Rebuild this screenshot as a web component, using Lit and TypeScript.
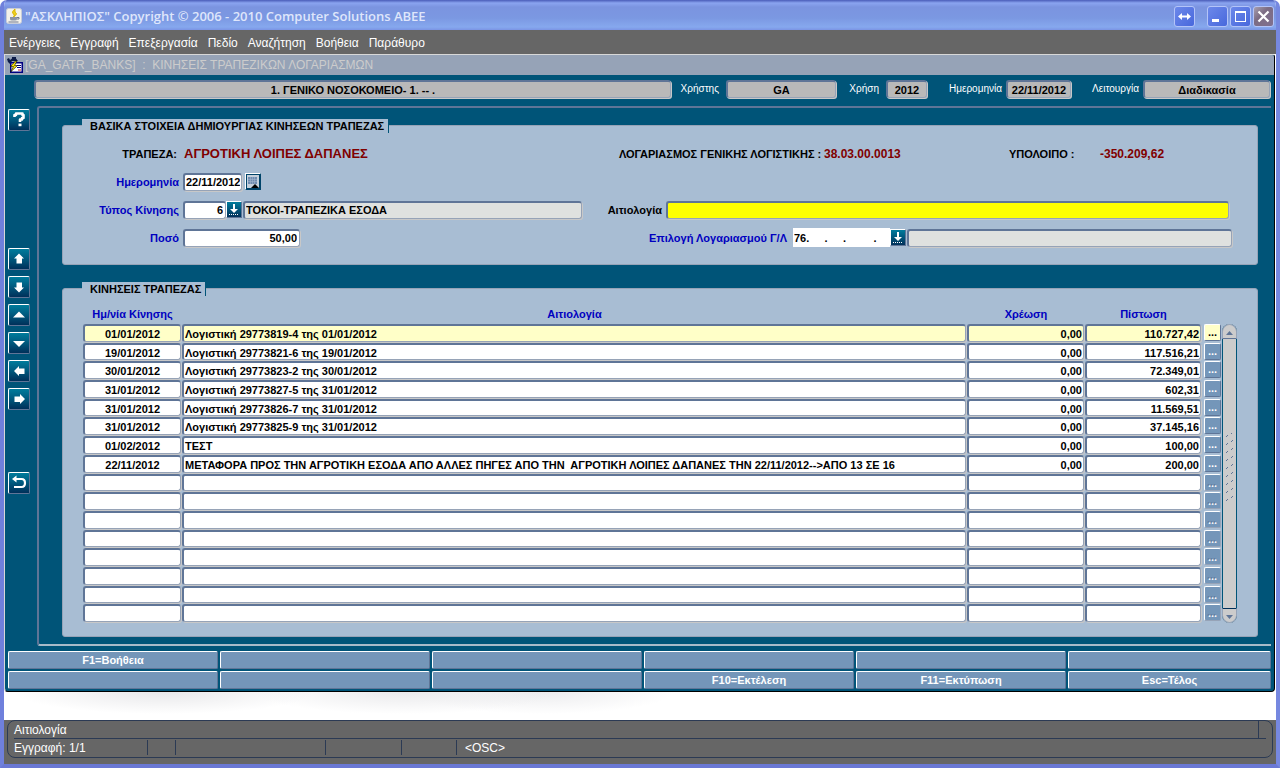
import { LitElement, html, svg, css } from "lit";
import { customElement, property } from "lit/decorators.js";
import { classMap } from "lit/directives/class-map.js";

interface Movement {
  date: string;
  reason: string;
  debit: string;
  credit: string;
}

const MENU = ["Ενέργειες", "Εγγραφή", "Επεξεργασία", "Πεδίο", "Αναζήτηση", "Βοήθεια", "Παράθυρο"];

const MOVEMENTS: Movement[] = [
  { date: "01/01/2012", reason: "Λογιστική 29773819-4 της 01/01/2012", debit: "0,00", credit: "110.727,42" },
  { date: "19/01/2012", reason: "Λογιστική 29773821-6 της 19/01/2012", debit: "0,00", credit: "117.516,21" },
  { date: "30/01/2012", reason: "Λογιστική 29773823-2 της 30/01/2012", debit: "0,00", credit: "72.349,01" },
  { date: "31/01/2012", reason: "Λογιστική 29773827-5 της 31/01/2012", debit: "0,00", credit: "602,31" },
  { date: "31/01/2012", reason: "Λογιστική 29773826-7 της 31/01/2012", debit: "0,00", credit: "11.569,51" },
  { date: "31/01/2012", reason: "Λογιστική 29773825-9 της 31/01/2012", debit: "0,00", credit: "37.145,16" },
  { date: "01/02/2012", reason: "ΤΕΣΤ", debit: "0,00", credit: "100,00" },
  {
    date: "22/11/2012",
    reason: "ΜΕΤΑΦΟΡΑ ΠΡΟΣ ΤΗΝ ΑΓΡΟΤΙΚΗ ΕΣΟΔΑ ΑΠΟ ΑΛΛΕΣ ΠΗΓΕΣ ΑΠΟ ΤΗΝ  ΑΓΡΟΤΙΚΗ ΛΟΙΠΕΣ ΔΑΠΑΝΕΣ ΤΗΝ 22/11/2012-->ΑΠΟ 13 ΣΕ 16",
    debit: "0,00",
    credit: "200,00",
  },
];

const ROW_COUNT = 16;

const KEYS = ["F1=Βοήθεια", "", "", "", "", "", "", "", "", "F10=Εκτέλεση", "F11=Εκτύπωση", "Esc=Τέλος"];

const ICONS: Record<string, unknown> = {
  help: svg`<path d="M5.500 7V5H7V3.500H13.500V5H14.500V8H13V9.500H11V12" fill="none" stroke="#fff" stroke-width="2.600" stroke-linejoin="round"/><rect x="9.500" y="13.600" width="3" height="2.600" fill="#fff"/>`,
  up: svg`<path d="M10 4.500L15 9.500H13V14.500H7.500V9.500H5Z" fill="#fff"/>`,
  down: svg`<path d="M10 15.500L15 10.500H13V5.500H7.500V10.500H5Z" fill="#fff"/>`,
  triUp: svg`<path d="M10 6.500L16 12.500H4Z" fill="#fff"/>`,
  triDown: svg`<path d="M10 14L16 8H4Z" fill="#fff"/>`,
  left: svg`<path d="M5 10L10 5V7.500H15.500V13H10V15Z" fill="#fff"/>`,
  right: svg`<path d="M16 10L11 5V7.500H5.500V13H11V15Z" fill="#fff"/>`,
  undo: svg`<path d="M6 6H12.500Q16 6 16 10T12.500 14H5" fill="none" stroke="#fff" stroke-width="2.200"/><path d="M3 6L7.500 2.500V9.500Z" fill="#fff"/>`,
};

@customElement("tool-button")
export class ToolButton extends LitElement {
  @property() icon = "help";
  @property() label = "";

  static styles = css`
    :host {
      display: block;
    }
    .tool {
      display: block;
      box-sizing: border-box;
      width: 22px;
      height: 22px;
      padding: 0;
      border: 1px solid;
      border-color: #fff #5f7597 #5f7597 #fff;
      border-radius: 2px;
      background: linear-gradient(#007c9c, #006084 40%, #00305a);
    }
    .glyph {
      display: block;
      width: 20px;
      height: 20px;
    }
  `;

  render() {
    return html`<button class="tool" aria-label=${this.label}>
      <svg class="glyph" viewBox="0 0 20 20" aria-hidden="true">${ICONS[this.icon]}</svg>
    </button>`;
  }
}

@customElement("app-root")
export class AppRoot extends LitElement {
  static styles = css`
    :host {
      display: block;
      height: 100vh;
      font: bold 11px/14px "Liberation Sans", Arial, sans-serif;
      color: #000;
    }
    * {
      box-sizing: border-box;
    }
    button,
    input {
      font: inherit;
      color: inherit;
      margin: 0;
      border-radius: 0;
    }
    .window {
      display: flex;
      flex-direction: column;
      height: 100%;
      border: 4px solid #7688e0;
      border-top: 0;
      border-left-color: #6f80dc;
      border-bottom-color: #6a78d4;
      border-radius: 7px 7px 0 0;
      background: #fff;
      overflow: hidden;
    }
    .titlebar {
      display: flex;
      align-items: center;
      flex: none;
      height: 30px;
      margin: 0 -4px;
      padding: 2px 6px 0;
      background: linear-gradient(#4a5cb8, #8aa4f0 3px, #7b94e0 7px, #7b98e2 18px, #86a8ee 27px, #7b94e4);
      color: #dfe6fb;
      font: 600 13px/18px "Open Sans", "Noto Sans", sans-serif;
    }
    .java {
      width: 16px;
      height: 16px;
      margin-right: 3px;
    }
    .title {
      flex: 1;
      margin: 0;
      font: inherit;
    }
    .wbtn {
      width: 21px;
      height: 21px;
      margin-left: 2px;
      padding: 0;
      border: 1px solid #b4c4f8;
      border-radius: 3px;
      background: linear-gradient(135deg, #6c88ea, #4868dc);
    }
    .wbtn.apart {
      margin-right: 10px;
    }
    .wbtn.close {
      background: linear-gradient(135deg, #a8a0b0, #7c6c84 40%, #807090);
    }
    .wbtn svg {
      display: block;
      width: 19px;
      height: 19px;
    }
    .menubar {
      display: flex;
      flex: none;
      height: 24px;
      padding: 0 5px;
      gap: 10px;
      background: #666;
      color: #fff;
      font: 12px/26px "Liberation Sans", Arial, sans-serif;
    }
    .menubar button {
      padding: 0;
      border: 0;
      background: none;
    }
    .form {
      display: flex;
      flex-direction: column;
      flex: none;
      margin-right: 1px;
      border-left: 1px solid #d8d8d8;
      border-top: 1px solid #d8d8d8;
      border-right: 1px solid #000;
      border-bottom: 1px solid #000;
      border-radius: 0 3px 4px 4px;
      background: #005478;
      overflow: hidden;
    }
    .caption {
      display: flex;
      align-items: center;
      height: 20px;
      padding: 0 2px;
      gap: 1px;
      background: #96a3b7;
      color: #ccc;
      font: 12px/20px "Liberation Sans", Arial, sans-serif;
      white-space: pre;
    }
    .caption svg {
      width: 17px;
      height: 17px;
    }
    .fld {
      height: 19px;
      min-width: 0;
      width: 100%;
      padding: 0 2px;
      border: solid;
      border-width: 2px 1px 1px 2px;
      border-color: #5f7597 #96a3b7 #96a3b7 #5f7597;
      border-radius: 3px;
      box-shadow: 1px 1px 0 #c8c8c8;
      background: #fff;
      outline: 0;
    }
    .context .fld {
      background: #b9b9b9;
      text-align: center;
    }
    .context {
      display: grid;
      grid-template-columns: minmax(0, 1fr) 55px 110px 50px 41px 79px 65px 72px 127px;
      align-items: center;
      padding: 5px 4px 0 29px;
      color: #fff;
      font-size: 11px;
    }
    .context .fld {
      color: #000;
      height: 18px;
    }
    .context label {
      padding-right: 7px;
      text-align: right;
      font-size: 10px;
      font-weight: normal;
    }
    .context label.near {
      padding-right: 4px;
    }
    .work {
      display: grid;
      grid-template-columns: 32px minmax(0, 1fr);
      padding-right: 3px;
    }
    .tools {
      display: flex;
      flex-direction: column;
      padding: 11px 0 0 3px;
      gap: 6px;
    }
    .tools .first {
      margin-bottom: 111px;
    }
    .tools .last {
      margin-top: 56px;
    }
    .canvas {
      margin-top: 8px;
      padding: 10px 13px 7px 23px;
      border: 2px solid #5f7597;
      border-right: 0;
      border-bottom-color: #a8bac8;
      border-radius: 3px 0 0 3px;
    }
    .panel {
      margin: 7px 0 0;
      padding: 0 0 17px;
      border: 1px solid #96a3b7;
      border-radius: 3px;
      background: #a8bdd3;
    }
    .panel + .panel {
      margin-top: 23px;
      padding-bottom: 13px;
    }
    .tab {
      display: block;
      width: fit-content;
      height: 14px;
      margin: -7px 0 0 19px;
      padding: 0 4px 0 8px;
      border-right: 1px solid #005478;
      background: #a8bdd3;
      font: inherit;
    }
    .rows {
      display: grid;
      gap: 9px;
      padding: 11px 0 0;
    }
    .row {
      display: flex;
      height: 19px;
      align-items: center;
    }
    .row.info {
      display: grid;
      grid-template-columns: 120px 436px 204px 186px 90px 1fr;
      white-space: nowrap;
    }
    .row label,
    .lbl {
      flex: none;
      width: 120px;
      padding-right: 4px;
      text-align: right;
      color: #0000c0;
    }
    .row .lbl {
      padding-right: 6px;
      color: #000;
    }
    .row .lbl.start {
      width: auto;
      padding-right: 0;
      text-align: left;
    }
    .row label.reason {
      width: 84px;
      color: #000;
    }
    .row label.account {
      width: 493px;
      padding-right: 6px;
    }
    .val {
      padding-left: 1px;
      color: #800000;
      font-size: 13px;
    }
    .val.small {
      font-size: 12px;
    }
    .row .fld {
      flex: none;
      height: 18px;
    }
    .row .fill {
      flex: 1;
    }
    .row .w-type {
      width: 43px;
    }
    .row .w-amount {
      width: 117px;
    }
    .row .w-desc {
      width: 339px;
      padding: 0 1px;
    }
    .row .w-date {
      width: 59px;
      padding: 0 1px;
    }
    .num {
      text-align: right;
    }
    .off {
      background: #dfe1df;
    }
    .due {
      background: #ff0;
    }
    .mask {
      flex: none;
      width: 97px;
      height: 19px;
      padding: 0 1px;
      border: 0;
      outline: 0;
      background: #fff;
      white-space: pre;
    }
    .row.end-a {
      padding-right: 28px;
    }
    .row.end-b {
      padding-right: 25px;
    }
    .pick {
      flex: none;
      width: 16px;
      height: 17px;
      margin-right: 1px;
      padding: 0;
      border: 1px solid;
      border-color: #fff #5f7597 #5f7597 #fff;
      background: linear-gradient(#007c9c, #00305a);
    }
    .pick.cal {
      margin-left: 3px;
      background: #c4d0dc;
      border-color: #fff #00446a #00446a #fff;
      box-shadow: inset 0 0 0 1px #00446a;
    }
    .pick svg {
      display: block;
      width: 14px;
      height: 15px;
    }
    .list {
      display: grid;
      grid-template-columns: minmax(0, 1fr) 16px;
      padding: 10px 20px 0;
    }
    .data,
    .data thead,
    .data tbody {
      display: grid;
    }
    .data tbody {
      height: 299px;
      grid-template-rows: repeat(16, minmax(0, 1fr));
    }
    .data tr {
      display: grid;
      grid-template-columns: 99px minmax(0, 1fr) 118px 117px 19px;
    }
    .data th {
      height: 18px;
      padding: 0;
      color: #0000c0;
      line-height: 16px;
      text-align: center;
    }
    .data td {
      display: block;
      min-width: 0;
      margin: 0 1px 1px 0;
      padding: 0 1px;
      border: solid;
      border-width: 2px 1px 1px 2px;
      border-color: #5f7597 #96a3b7 #96a3b7 #5f7597;
      border-radius: 3px;
      box-shadow: 1px 1px 0 #c8c8c8;
      background: #fff;
      line-height: 16px;
      white-space: pre;
      overflow: hidden;
    }
    .data .current td {
      background: #ffffc8;
    }
    .data td.c {
      text-align: center;
    }
    .data td.num {
      text-align: right;
    }
    .data .act,
    .data .current .act {
      margin: 0;
      padding: 0 0 0 2px;
      border: 0;
      box-shadow: none;
      background: none;
      overflow: visible;
    }
    .more {
      display: block;
      width: 17px;
      height: 17px;
      padding: 0;
      border: 1px solid;
      border-color: #fff #5f7597 #5f7597 #fff;
      border-radius: 2px;
      background: #7496b9;
      color: #fff;
      line-height: 15px;
    }
    .current .more {
      background: #ffffc8;
      color: #000;
    }
    .more:disabled {
      border-color: #fff #96a3b7 #96a3b7 #fff;
      color: #f0f4f8;
      line-height: 17px;
      text-shadow: -1px -1px 0 #5f7597;
    }
    .scroll {
      display: flex;
      flex-direction: column;
      margin: 18px 0 0 1px;
      background: #ccc;
      border: solid #005478;
      border-width: 0 1px;
      border-radius: 8px;
    }
    .arrow {
      flex: none;
      height: 15px;
      margin: 0 -1px;
      padding: 0;
      border: 1px solid #96a3b7;
      border-bottom-color: #5f7597;
      border-radius: 8px 8px 0 0;
      background: #ccc;
    }
    .arrow.dn {
      border-radius: 0 0 8px 8px;
      border-color: #00305a #96a3b7 #96a3b7;
    }
    .arrow svg {
      display: block;
      width: 13px;
      height: 12px;
    }
    .thumb {
      flex: 1;
      display: grid;
      place-items: center;
      padding-bottom: 14px;
    }
    .thumb svg {
      width: 8px;
      height: 68px;
    }
    .keys {
      display: grid;
      grid-template-columns: repeat(5, minmax(0, 210fr)) minmax(0, 203fr);
      gap: 2px;
      padding: 5px 3px 2px;
    }
    .keys button {
      height: 18px;
      padding: 0;
      border: 1px solid;
      border-color: #fff #5f7597 #5f7597 #fff;
      border-radius: 2px;
      background: #7496b9;
      color: #fff;
      line-height: 16px;
    }
    .shade {
      flex: 1;
      background:
        radial-gradient(ellipse 150px 22px at 160px 0, #e8e8ea, transparent),
        radial-gradient(ellipse 150px 22px at 400px 0, #eaeaec, transparent),
        radial-gradient(ellipse 130px 22px at 540px 0, #ececee, transparent),
        #fff;
    }
    .status {
      flex: none;
      padding: 0 3px 6px;
      background: #666;
      color: #fff;
      font: 12px/18px "Liberation Sans", Arial, sans-serif;
    }
    .frame {
      border: 1px solid #2b3a54;
      border-radius: 8px;
      padding: 0 6px;
    }
    .hint {
      display: flex;
      justify-content: space-between;
      height: 18px;
      border-bottom: 1px solid #2b3a54;
      line-height: 19px;
    }
    .hint .stop {
      width: 8px;
      border-left: 1px solid #2b3a54;
    }
    .cells {
      display: grid;
      grid-template-columns: 134px 28px 150px 76px 55px 1fr;
      height: 18px;
      padding-top: 1px;
    }
    .cells span {
      height: 15px;
      border-right: 1px solid #2b3a54;
      line-height: 17px;
    }
    .cells span:last-child {
      padding-left: 8px;
      border: 0;
    }
  `;

  private more(row: Movement | undefined) {
    return html`<button class="more" aria-label="Λεπτομέρειες" ?disabled=${!row}>...</button>`;
  }

  private pick(label: string) {
    return html`<button class="pick" aria-label=${label}>
      <svg viewBox="0 0 14 15" aria-hidden="true">
        <path d="M6 2H8V7H11L7 11L3 7H6Z" fill="#fff" />
        <path d="M2 12.500H12" stroke="#fff" stroke-dasharray="1 1" />
      </svg>
    </button>`;
  }

  render() {
    const rows = Array.from({ length: ROW_COUNT }, (_, i) => MOVEMENTS[i]);
    return html`
      <div class="window">
        <header class="titlebar">
          <svg class="java" viewBox="0 0 16 16" aria-hidden="true">
            <rect x="0.500" y="0.500" width="15" height="15" rx="2" fill="#f4f2ea" stroke="#c8ccd8" />
            <path d="M9 1Q5 4 7.500 6Q9 7 7.500 9Q12 6 9.500 4.500Q8.500 3.500 9 1Z" fill="#f0d020" stroke="#d8b400" />
            <path d="M4 9H11V11Q11 12.500 9 12.500H6Q4 12.500 4 11Z" fill="#8a93a8" />
            <path d="M11 9.500H13V11H11M2.500 14H12.500" fill="none" stroke="#6c7690" />
          </svg>
          <h1 class="title">"ΑΣΚΛΗΠΙΟΣ" Copyright © 2006 - 2010 Computer Solutions ABEE</h1>
          <button class="wbtn apart" aria-label="Εναλλαγή">
            <svg viewBox="0 0 19 19"><path d="M3 9.500L7 6V8.500H12V6L16 9.500L12 13V10.500H7V13Z" fill="#fff" /></svg>
          </button>
          <button class="wbtn" aria-label="Ελαχιστοποίηση">
            <svg viewBox="0 0 19 19"><path d="M4 12H11V15H4Z" fill="#fff" /></svg>
          </button>
          <button class="wbtn" aria-label="Μεγιστοποίηση">
            <svg viewBox="0 0 19 19"><path d="M4 4H15V15H4ZM5 6V14H14V6Z" fill="#fff" fill-rule="evenodd" /></svg>
          </button>
          <button class="wbtn close" aria-label="Κλείσιμο">
            <svg viewBox="0 0 19 19"><path d="M4.500 4.500L14.500 14.500M14.500 4.500L4.500 14.500" stroke="#fff" stroke-width="2.200" /></svg>
          </button>
        </header>

        <nav class="menubar">${MENU.map((m) => html`<button>${m}</button>`)}</nav>

        <main class="form">
          <div class="caption">
            <svg viewBox="0 0 17 17" aria-hidden="true">
              <path d="M0 2L2 1L3 3L5 1.500V0H9V1.500L11 4H5L3 7L1 5Z" fill="#0c1c48" />
              <path d="M3 5H16V16H3Z" fill="#000080" />
              <path d="M4.500 6.500H14.500V14.500H4.500Z" fill="#fff" />
              <path d="M10 8.500H14M10 10.500H14" stroke="#000080" />
              <path d="M11 13H14" stroke="#c02020" />
              <path d="M8.500 4L3.500 9.500H6.500L3.500 15L10.500 8.500H7.500L10 4Z" fill="#ffe800" stroke="#000" stroke-width="0.600" />
            </svg>
            <span>[GA_GATR_BANKS]  :  ΚΙΝΗΣΕΙΣ ΤΡΑΠΕΖΙΚΩΝ ΛΟΓΑΡΙΑΣΜΩΝ</span>
          </div>

          <div class="context">
            <input class="fld" aria-label="Φορέας" readonly value="1. ΓΕΝΙΚΟ ΝΟΣΟΚΟΜΕΙΟ- 1. -- ." />
            <label for="user">Χρήστης</label>
            <input class="fld" id="user" readonly value="GA" />
            <label for="year">Χρήση</label>
            <input class="fld" id="year" readonly value="2012" />
            <label class="near" for="today">Ημερομηνία</label>
            <input class="fld" id="today" readonly value="22/11/2012" />
            <label class="near" for="mode">Λειτουργία</label>
            <input class="fld" id="mode" readonly value="Διαδικασία" />
          </div>

          <div class="work">
            <div class="tools">
              <tool-button class="first" icon="help" label="Βοήθεια"></tool-button>
              <tool-button icon="up" label="Πρώτη εγγραφή"></tool-button>
              <tool-button icon="down" label="Τελευταία εγγραφή"></tool-button>
              <tool-button icon="triUp" label="Προηγούμενη εγγραφή"></tool-button>
              <tool-button icon="triDown" label="Επόμενη εγγραφή"></tool-button>
              <tool-button icon="left" label="Προηγούμενο πεδίο"></tool-button>
              <tool-button icon="right" label="Επόμενο πεδίο"></tool-button>
              <tool-button class="last" icon="undo" label="Επιστροφή"></tool-button>
            </div>

            <div class="canvas">
              <section class="panel">
                <h2 class="tab">ΒΑΣΙΚΑ ΣΤΟΙΧΕΙΑ ΔΗΜΙΟΥΡΓΙΑΣ ΚΙΝΗΣΕΩΝ ΤΡΑΠΕΖΑΣ</h2>
                <div class="rows">
                  <div class="row info">
                    <span class="lbl">ΤΡΑΠΕΖΑ:</span>
                    <span class="val">ΑΓΡΟΤΙΚΗ ΛΟΙΠΕΣ ΔΑΠΑΝΕΣ</span>
                    <span class="lbl start">ΛΟΓΑΡΙΑΣΜΟΣ ΓΕΝΙΚΗΣ ΛΟΓΙΣΤΙΚΗΣ :</span>
                    <span class="val small">38.03.00.0013</span>
                    <span class="lbl start">ΥΠΟΛΟΙΠΟ :</span>
                    <span class="val small">-350.209,62</span>
                  </div>
                  <div class="row">
                    <label for="date">Ημερομηνία</label>
                    <input class="fld w-date" id="date" value="22/11/2012" />
                    <button class="pick cal" aria-label="Ημερολόγιο">
                      <svg viewBox="0 0 14 15" aria-hidden="true">
                        <path d="M2 3H11V10H2Z" fill="#6f8cb0" />
                        <path d="M2 5.500H11M2 7.500H11M4.500 3V10M6.500 3V10M8.500 3V10" stroke="#9fb4cc" stroke-width="0.600" />
                        <path d="M5 14L9 10L13 14Z" fill="#000" />
                      </svg>
                    </button>
                  </div>
                  <div class="row end-a">
                    <label for="type">Τύπος Κίνησης</label>
                    <input class="fld w-type num" id="type" value="6" />
                    ${this.pick("Λίστα τύπων")}
                    <input class="fld w-desc off" aria-label="Περιγραφή τύπου" readonly value="ΤΟΚΟΙ-ΤΡΑΠΕΖΙΚΑ ΕΣΟΔΑ" />
                    <label class="reason" for="reason">Αιτιολογία</label>
                    <input class="fld fill due" id="reason" />
                  </div>
                  <div class="row end-b">
                    <label for="amount">Ποσό</label>
                    <input class="fld w-amount num" id="amount" value="50,00" />
                    <label class="account" for="account">Επιλογή Λογαριασμού Γ/Λ</label>
                    <input class="mask" id="account" value="76.     .     .         ." />
                    ${this.pick("Λίστα λογαριασμών")}
                    <input class="fld fill off" aria-label="Περιγραφή λογαριασμού" readonly />
                  </div>
                </div>
              </section>

              <section class="panel">
                <h2 class="tab">ΚΙΝΗΣΕΙΣ ΤΡΑΠΕΖΑΣ</h2>
                <div class="list">
                  <table class="data">
                    <thead>
                      <tr>
                        <th>Ημ/νία Κίνησης</th>
                        <th>Αιτιολογία</th>
                        <th>Χρέωση</th>
                        <th>Πίστωση</th>
                        <th></th>
                      </tr>
                    </thead>
                    <tbody>
                      ${rows.map(
                        (r, i) => html`<tr class=${classMap({ current: i === 0 })}>
                          <td class="c">${r?.date}</td>
                          <td>${r?.reason}</td>
                          <td class="num">${r?.debit}</td>
                          <td class="num">${r?.credit}</td>
                          <td class="act">${this.more(r)}</td>
                        </tr>`
                      )}
                    </tbody>
                  </table>
                  <div class="scroll">
                    <button class="arrow" aria-label="Πάνω">
                      <svg viewBox="0 0 13 12"><path d="M3 9L6.500 5L10 9Z" fill="#5f7597" /></svg>
                    </button>
                    <div class="thumb">
                      <svg viewBox="0 0 8 68" aria-hidden="true">
                        ${Array.from(
                          { length: 9 },
                          (_, i) =>
                            svg`<path d=${`M0 ${i * 8 + 4}L2 ${i * 8 + 2}M5 ${i * 8 + 1}L7 ${i * 8 - 1}`} stroke="#5f7597" />`
                        )}
                      </svg>
                    </div>
                    <button class="arrow dn" aria-label="Κάτω">
                      <svg viewBox="0 0 13 12"><path d="M3 5L6.500 9L10 5Z" fill="#5f7597" /></svg>
                    </button>
                  </div>
                </div>
              </section>
            </div>
          </div>

          <div class="keys">${KEYS.map((k) => html`<button>${k}</button>`)}</div>
        </main>

        <div class="shade"></div>

        <footer class="status">
          <div class="frame">
            <div class="hint"><span>Αιτιολογία</span><span class="stop"></span></div>
            <div class="cells">
              <span>Εγγραφή: 1/1</span><span></span><span></span><span></span><span></span><span>&lt;OSC&gt;</span>
            </div>
          </div>
        </footer>
      </div>
    `;
  }
}
